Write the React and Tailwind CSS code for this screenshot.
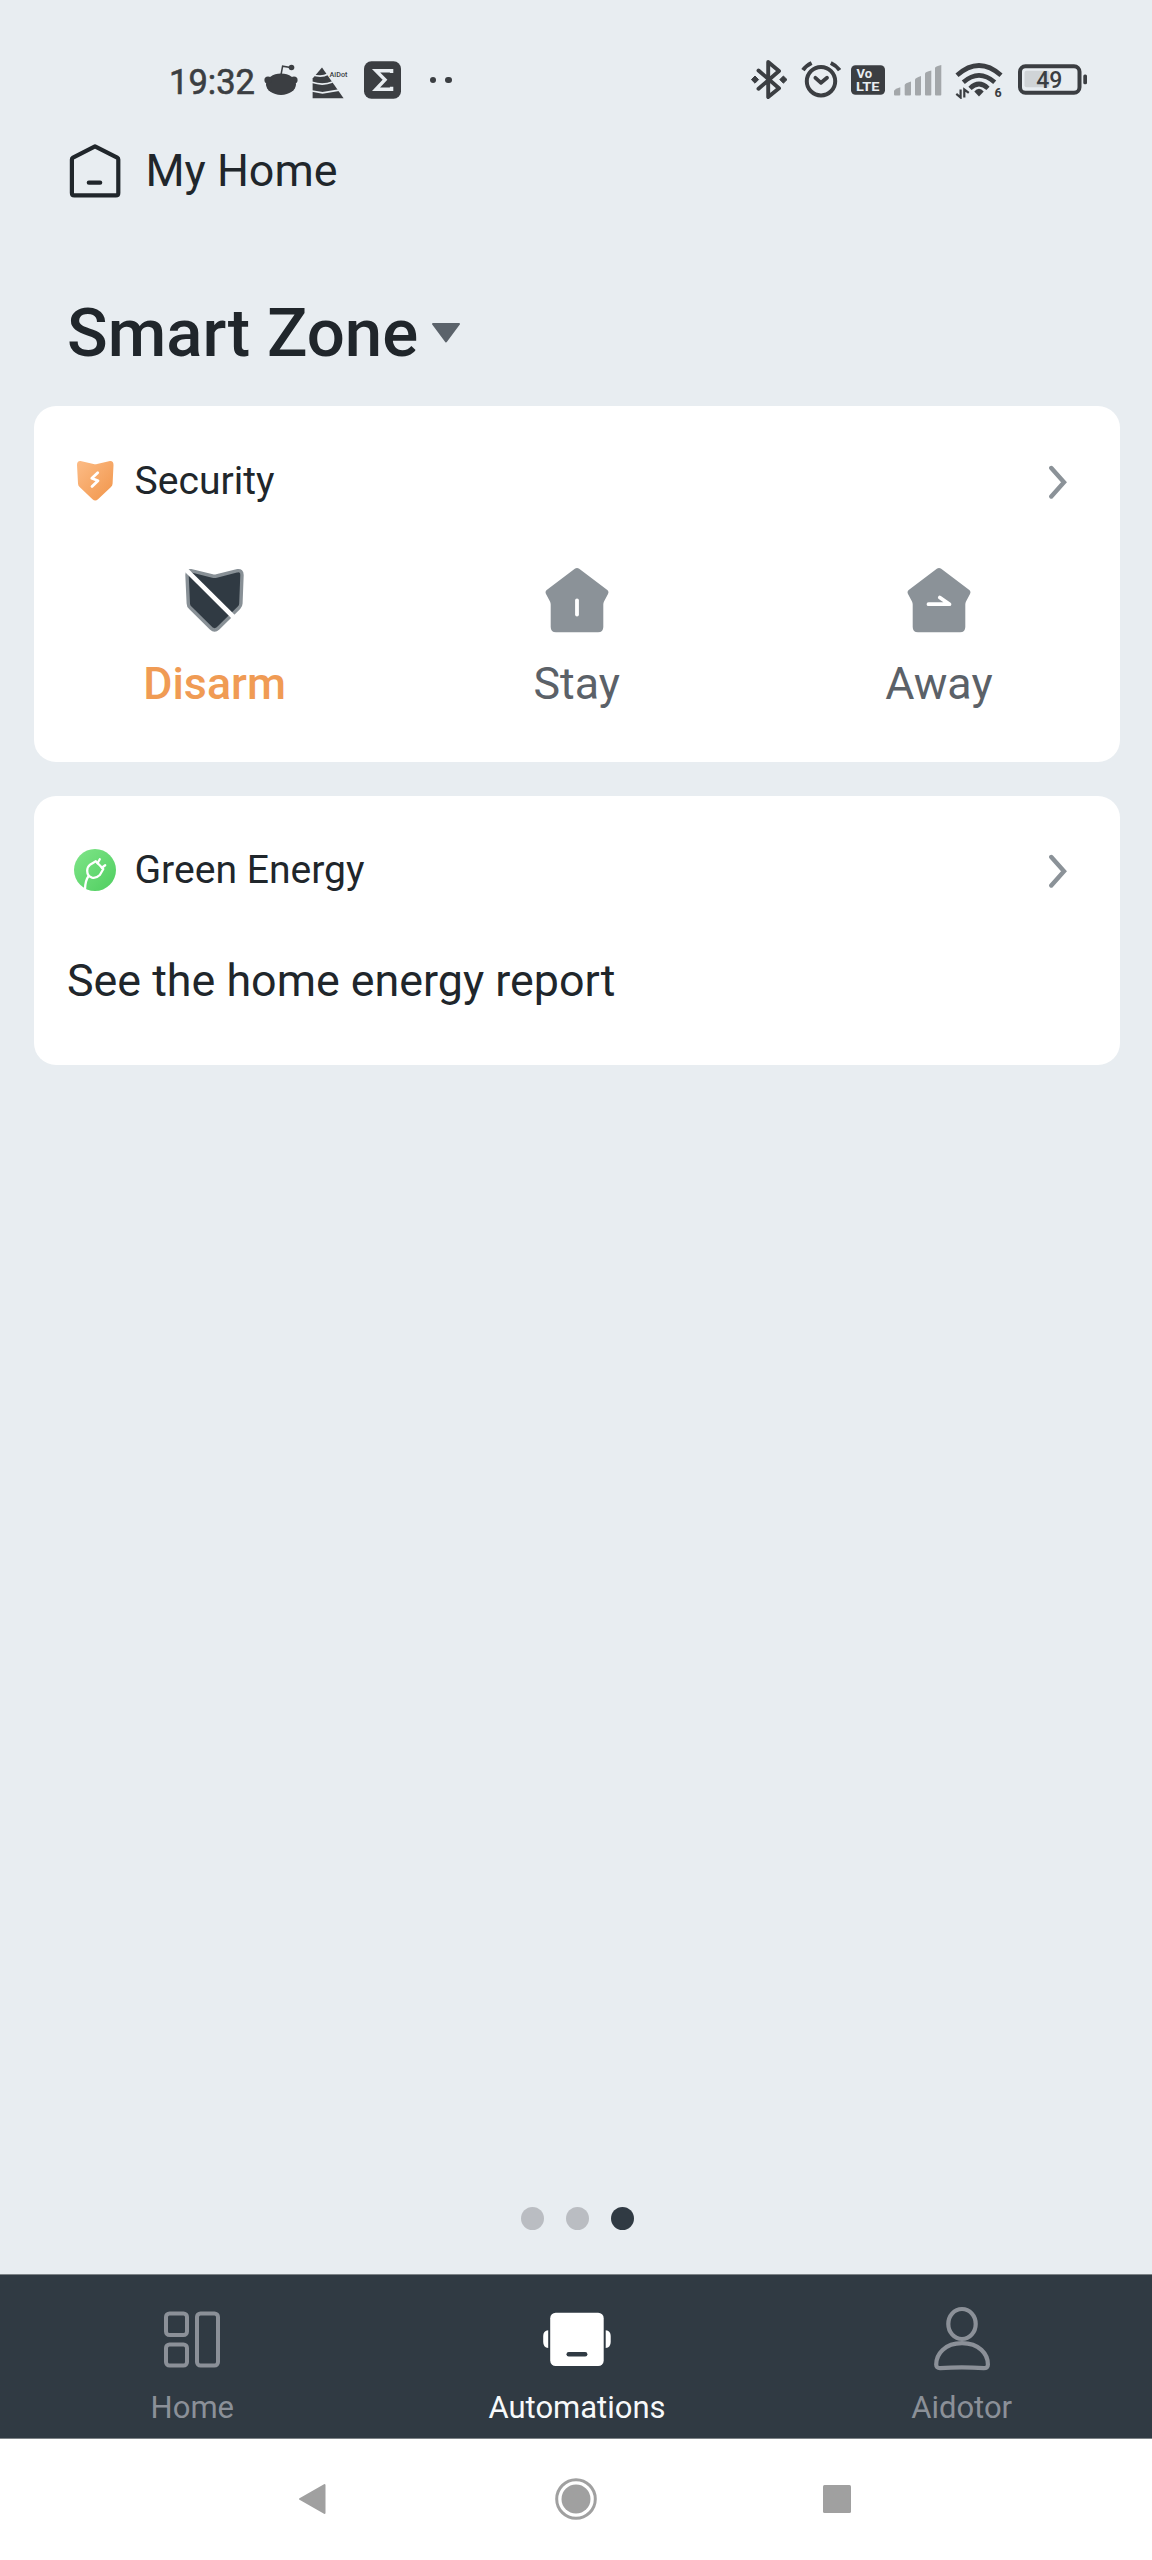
import React from 'react';

const modes = [
  { label: 'Disarm', icon: DisarmIcon, active: true },
  { label: 'Stay', icon: StayIcon },
  { label: 'Away', icon: AwayIcon },
];

const tabs = [
  { label: 'Home', icon: HomeTabIcon },
  { label: 'Automations', icon: RobotIcon, active: true },
  { label: 'Aidotor', icon: PersonIcon },
];

function RedditIcon() {
  return (
    <svg className="ml-[9px]" width="34" height="32" viewBox="263 64 34 32" fill="#3b3e42">
      <ellipse cx="280" cy="84.3" rx="15" ry="10.7" />
      <circle cx="267" cy="80" r="3.6" />
      <circle cx="293" cy="80" r="3.6" />
      <path d="M280 75l1.6-8.8 8 1.3" fill="none" stroke="#3b3e42" strokeWidth="1.5" />
      <circle cx="290.5" cy="67.5" r="2.8" />
    </svg>
  );
}

function PyramidIcon() {
  return (
    <svg className="ml-[13px]" width="38" height="38" viewBox="311 61 38 38">
      <path d="M322 67.5L343.6 98.3h-31V78.5z" fill="#3b3e42" />
      <path d="M312 74.8q10 3 15.6-.6M312 82.3q11 3.6 20.5-.3M312 91l10.5 1.8L339 90.2" fill="none" stroke="#e8edf1" strokeWidth="1.7" />
      <text x="329.6" y="76.6" fontSize="7.2" fontWeight="500" fill="#3b3e42">AiDot</text>
    </svg>
  );
}

function SigmaIcon() {
  return (
    <svg className="ml-[15px]" width="37" height="38" viewBox="0 0 37 38">
      <rect y=".3" width="37" height="37.4" rx="7.5" fill="#3b3e42" />
      <path d="M27.6 12V9.7H12l9 9.1-9 9.4h15.6V25.7" fill="none" stroke="#e8edf1" strokeWidth="3.4" />
    </svg>
  );
}

function BluetoothIcon() {
  return (
    <svg width="38" height="42" viewBox="750 59 38 42">
      <path d="M758.5 70.5l20.5 17.8-10.8 8.7V62l10.8 9-20.5 17.8" fill="none" stroke="#3b3e42" strokeWidth="3.9" strokeLinejoin="round" strokeLinecap="round" />
      <path d="M755 76l3.6 3.6-3.6 3.6-3.6-3.6zM783.4 76l3.6 3.6-3.6 3.6-3.6-3.6z" fill="#3b3e42" stroke="#3b3e42" strokeWidth="1" strokeLinejoin="round" />
    </svg>
  );
}

function AlarmIcon() {
  return (
    <svg className="ml-[13px]" width="40" height="40" viewBox="801 60 40 40" fill="none" stroke="#3b3e42" strokeWidth="4">
      <circle cx="821" cy="81.2" r="14.2" />
      <path d="M815.4 77.8l5.6 5 6-5" strokeWidth="3.8" strokeLinecap="round" strokeLinejoin="round" />
      <path d="M803 70.2q3-4.6 8.6-7.2M830.8 63q5.6 2.6 8.8 7.2" />
    </svg>
  );
}

function VolteIcon() {
  return (
    <svg className="ml-[10px]" width="34" height="30" viewBox="851 65 34 30">
      <rect x="851" y="65.2" width="34" height="29.6" rx="4.5" fill="#3b3e42" />
      <text x="856.5" y="78.2" fontSize="13" fontWeight="700" fill="#e8edf1">Vo</text>
      <text x="856" y="91" fontSize="13.5" fontWeight="700" fill="#e8edf1" textLength="23.5" lengthAdjust="spacingAndGlyphs">LTE</text>
    </svg>
  );
}

function SignalIcon() {
  return (
    <svg className="ml-[9px]" width="48" height="32" viewBox="895 64 48 32" fill="#a3a7aa">
      <path d="M895 91q0-1.4 6.3-3.7V94.5q0 1-1 1H896q-1 0-1-1z" />
      <path d="M905.7 85q0-1.4 6.3-3.4V94.5q0 1-1 1h-4.3q-1 0-1-1z" />
      <path d="M916 79.5q0-1.4 6-3.5V94.5q0 1-1 1h-4q-1 0-1-1z" />
      <path d="M926 73.500q0-1.400 6.300-3V94.500q0 1-1 1H927q-1 0-1-1z" />
      <path d="M936 68q0-1.400 6.300-3V94.500q0 1-1 1H937q-1 0-1-1z" />
    </svg>
  );
}

function WifiIcon() {
  return (
    <svg className="ml-[13px]" width="48" height="38" viewBox="955 61 48 38">
      <g fill="none" stroke="#3b3e42" strokeWidth="4.6">
        <path d="M957 75.3q22-19.6 44 0" />
        <path d="M963.3 82.3q15.7-13.8 31.4 0" />
        <path d="M970 88.3q9-8.6 18 0" />
      </g>
      <path d="M979 88.8q2.5 0 4.7 2.6L979 96.4l-4.7-5q2.2-2.6 4.7-2.6z" fill="#3b3e42" />
      <path d="M960.6 89.5v8l-4.3-3.6M964.3 97.5v-8l4.5 3.4" fill="none" stroke="#3b3e42" strokeWidth="2.2" />
      <text x="994.5" y="96.8" fontSize="12.5" fontWeight="700" fill="#3b3e42">6</text>
    </svg>
  );
}

function BatteryIcon() {
  return (
    <svg className="ml-[15px]" width="70" height="32" viewBox="1018 64 70 32">
      <rect x="1020" y="66.2" width="59.5" height="26.6" rx="5.5" fill="none" stroke="#3b3e42" strokeWidth="4" />
      <rect x="1024.5" y="70.7" width="25" height="16.6" rx="2" fill="#d0d4d7" />
      <rect x="1083.3" y="74.5" width="3.7" height="9.8" rx="1.5" fill="#3b3e42" />
      <text x="1036.2" y="88.4" fontSize="23" fontWeight="500" fill="#3b3e42">49</text>
    </svg>
  );
}

function HouseIcon() {
  return (
    <svg width="52" height="56" viewBox="69 143 52 56" fill="none" stroke="#20262b" strokeWidth="4.2" strokeLinejoin="round" strokeLinecap="round">
      <path d="M95 146.3L117.2 157.6Q118.3 158.2 118.3 159.5V192.9Q118.3 195.3 115.9 195.3H74.3Q71.9 195.3 71.9 192.9V159.5Q71.9 158.2 73 157.6z" />
      <path d="M88.8 182.7h11.4" />
    </svg>
  );
}

function SecurityIcon() {
  return (
    <svg width="38" height="42" viewBox="76 460 38 42">
      <defs>
        <linearGradient id="shield" x1="0" y1="0" x2="1" y2="1">
          <stop offset="0" stopColor="#fcbc86" />
          <stop offset="1" stopColor="#f1954a" />
        </linearGradient>
      </defs>
      <path d="M80.5 461Q77 460.8 77 465L78 483.5Q78 485.5 79.6 487L92.5 499.3Q95.3 501.8 98 499.3L111 487Q112.5 485.5 112.6 483.5L113.5 465Q113.5 460.8 110 461L97 464Q95.3 464.5 93.5 464z" fill="url(#shield)" />
      <path d="M97.7 472.7l-5.9 5.5 6.2 2.6-6 5.6" fill="none" stroke="#fff" strokeWidth="2.8" strokeLinecap="round" strokeLinejoin="round" />
    </svg>
  );
}

function EnergyIcon() {
  return (
    <svg width="42" height="42" viewBox="74 849.3 42 42">
      <defs>
        <linearGradient id="energy" x1="0" y1="0" x2="1" y2="1">
          <stop offset="0" stopColor="#7fe588" />
          <stop offset="1" stopColor="#4fce60" />
        </linearGradient>
      </defs>
      <circle cx="95" cy="870.3" r="21" fill="url(#energy)" />
      <g fill="none" stroke="#fff" strokeWidth="2.3" strokeLinecap="round" strokeLinejoin="round">
        <path d="M95.8 861.5l7.5 7.8-3.5 6q-3.5 3.5-7.8 2.6-4.8-1.5-4.8-6.8 0-4 3.2-6.4z" />
        <path d="M97.5 863.5l2.3-4M101.8 868l3.4-2.5" />
        <path d="M88.5 876.5q-3.2 4-3.5 13" />
      </g>
    </svg>
  );
}

function ChevronIcon() {
  return (
    <svg width="20" height="36" viewBox="0 0 20 36" fill="none" stroke="#8b9298" strokeWidth="4.4" strokeLinecap="round" strokeLinejoin="miter">
      <path d="M3.3 5L16 19.300 3.300 33.500" />
    </svg>
  );
}

function DisarmIcon() {
  return (
    <svg width="62" height="66" viewBox="184 567 62 66">
      <path d="M191 570.7Q187 570.2 187 575L188.3 603.5Q188.3 606 190.3 607.8L211 628.3Q214.6 631.6 218.2 628.3L239 607.8Q240.8 606 240.9 603.5L242 575Q242 570.2 237.5 570.7L216.5 576Q214.6 576.5 212.5 576z" fill="#303a43" stroke="#889096" strokeWidth="3.4" />
      <path d="M184 567.8L235.5 619" stroke="#fff" strokeWidth="4.6" />
    </svg>
  );
}

function SolidHouse({ children }) {
  return (
    <svg width="64" height="66" viewBox="0 0 64 66">
      <path d="M29.8 1.8Q32 .4 34.2 1.8L62.3 23Q64.2 24.7 63 27L59 34.5Q58.3 36 58.3 37.5V60Q58.3 65.3 53 65.3H11Q5.7 65.3 5.7 60V37.5Q5.7 36 5 34.5L1 27Q-.2 24.7 1.7 23z" fill="#8b9298" />
      <g fill="none" stroke="#fff" strokeWidth="3.8" strokeLinecap="round" strokeLinejoin="round">{children}</g>
    </svg>
  );
}

function StayIcon() {
  return (
    <SolidHouse>
      <path d="M32 33.3V47.5" />
    </SolidHouse>
  );
}

function AwayIcon() {
  return (
    <SolidHouse>
      <path d="M21.5 37.2H42.5L32.8 30.5" />
    </SolidHouse>
  );
}

function HomeTabIcon() {
  return (
    <svg width="56" height="66" viewBox="164 2306 56 66" fill="none" stroke="#8b9098" strokeWidth="4">
      <rect x="166" y="2313.5" width="21" height="21.5" rx="3.5" />
      <rect x="166" y="2344.5" width="21" height="21" rx="3.5" />
      <rect x="197" y="2313.5" width="21" height="52" rx="3.5" />
    </svg>
  );
}

function RobotIcon() {
  return (
    <svg width="68" height="66" viewBox="542.8 2306 68 66" fill="#fff">
      <rect x="550" y="2312.7" width="53.5" height="53.3" rx="5.5" />
      <path d="M548 2330.3V2348Q543 2347.5 543 2342V2336Q543 2330.8 548 2330.3zM605.5 2330.3V2348Q610.5 2347.5 610.5 2342V2336Q610.5 2330.8 605.5 2330.3z" />
      <path d="M568.5 2354.3h16.5" stroke="#303a43" strokeWidth="4.4" strokeLinecap="round" />
    </svg>
  );
}

function PersonIcon() {
  return (
    <svg width="58" height="66" viewBox="932.3 2306 58 66" fill="none" stroke="#8b9098" strokeWidth="4.2">
      <ellipse cx="961.3" cy="2324" rx="13.7" ry="15" />
      <path d="M961.3 2343.2C944 2343.2 935.5 2354 935.5 2364.5Q935.5 2368.3 939.5 2368.2Q961 2366.6 983 2368.2Q987.2 2368.3 987.2 2364.5C987.2 2354 978.5 2343.2 961.3 2343.2z" />
    </svg>
  );
}

function StatusBar() {
  return (
    <div className="flex h-[140px] items-start justify-between pt-[58px] pr-[64px] pl-[169px]">
      <div className="flex h-[44px] items-center">
        <span className="pt-[4px] text-[34.5px] leading-[40px] text-[#3b3e42] [-webkit-text-stroke:0.6px_#3b3e42]">19:32</span>
        <RedditIcon />
        <PyramidIcon />
        <SigmaIcon />
        <div className="ml-[29px] flex gap-[9px]">
          <span className="size-[6.5px] rounded-full bg-[#3b3e42]" />
          <span className="size-[6.5px] rounded-full bg-[#3b3e42]" />
        </div>
      </div>
      <div className="flex h-[44px] items-center">
        <BluetoothIcon />
        <AlarmIcon />
        <VolteIcon />
        <SignalIcon />
        <WifiIcon />
        <BatteryIcon />
      </div>
    </div>
  );
}

function CardHeader({ icon, title }) {
  return (
    <div className="flex h-[50px] items-center pr-[52px] pl-[39.5px]">
      <span className="flex w-[44px] justify-center">{icon}</span>
      <h2 className="ml-[17.5px] flex-1 text-[39.1px] leading-[46px] text-[#20262b]">{title}</h2>
      <ChevronIcon />
    </div>
  );
}

export default function App() {
  return (
    <div className="flex h-[2560px] w-[1152px] flex-col overflow-hidden bg-[#e8edf1] font-['Roboto',sans-serif]">
      <StatusBar />

      <header className="flex h-[62px] items-center pl-[69px]">
        <HouseIcon />
        <span className="ml-[24.5px] text-[44.8px] leading-[54px] text-[#20262b]">My Home</span>
      </header>

      <div className="mt-[91px] flex h-[80px] items-center pl-[67px]">
        <h1 className="text-[67.2px] leading-[80px] font-medium text-[#20262b]">Smart Zone</h1>
        <svg className="ml-[13px]" width="30" height="22" viewBox="0 0 30 22">
          <path d="M2 2H28L15 19.5z" fill="#5b636b" stroke="#5b636b" strokeWidth="2" strokeLinejoin="round" />
        </svg>
      </div>

      <main className="mt-[33px] flex flex-1 flex-col gap-[34px] pr-[32px] pl-[33.5px]">
        {/* Security */}
        <section className="h-[356px] rounded-[22px] bg-white pt-[50px]">
          <CardHeader icon={<SecurityIcon />} title="Security" />
          <div className="mt-[61px] grid grid-cols-3">
            {modes.map(({ label, icon: Icon, active }) => (
              <button key={label} className="flex flex-col items-center gap-[25px]">
                <Icon />
                <span className={`text-[44.8px] leading-[52px] ${active ? 'font-medium text-[#f09b54]' : 'text-[#5b6168]'}`}>
                  {label}
                </span>
              </button>
            ))}
          </div>
        </section>

        {/* Green energy */}
        <section className="h-[269px] rounded-[22px] bg-white pt-[49px]">
          <CardHeader icon={<EnergyIcon />} title="Green Energy" />
          <p className="mt-[60px] pl-[33.5px] text-[44.8px] leading-[52px] text-[#20262b]">See the home energy report</p>
        </section>
      </main>

      <div className="mb-[44px] flex justify-center gap-[22px] pl-[2px]">
        <span className="size-[23px] rounded-full bg-[#babdc2]" />
        <span className="size-[23px] rounded-full bg-[#babdc2]" />
        <span className="size-[23px] rounded-full bg-[#303a43]" />
      </div>

      <nav className="-mr-[2px] grid h-[165px] grid-cols-3 border-y border-[#7d8387] bg-[#303a43] pt-[31px]">
        {tabs.map(({ label, icon: Icon, active }) => (
          <button key={label} className="flex flex-col items-center gap-[18px]">
            <Icon />
            <span className={`text-[31px] leading-[36px] ${active ? 'text-[#f7f9fa]' : 'text-[#8b9098]'}`}>{label}</span>
          </button>
        ))}
      </nav>

      {/* Android navigation buttons */}
      <div className="flex h-[121px] items-center justify-between bg-white pr-[301px] pb-px pl-[298px]">
        <svg width="28" height="34" viewBox="0 0 28 34">
          <path d="M26.5 3V31L2 17z" fill="#a0a0a0" stroke="#a0a0a0" strokeWidth="2" strokeLinejoin="round" />
        </svg>
        <svg className="ml-[2px]" width="42" height="42" viewBox="0 0 42 42">
          <circle cx="21" cy="21" r="19.3" fill="none" stroke="#a0a0a0" strokeWidth="3" />
          <circle cx="21" cy="21" r="14.5" fill="#a0a0a0" />
        </svg>
        <svg width="28" height="28" viewBox="0 0 28 28">
          <rect width="28" height="28" rx="1.5" fill="#a0a0a0" />
        </svg>
      </div>
    </div>
  );
}
